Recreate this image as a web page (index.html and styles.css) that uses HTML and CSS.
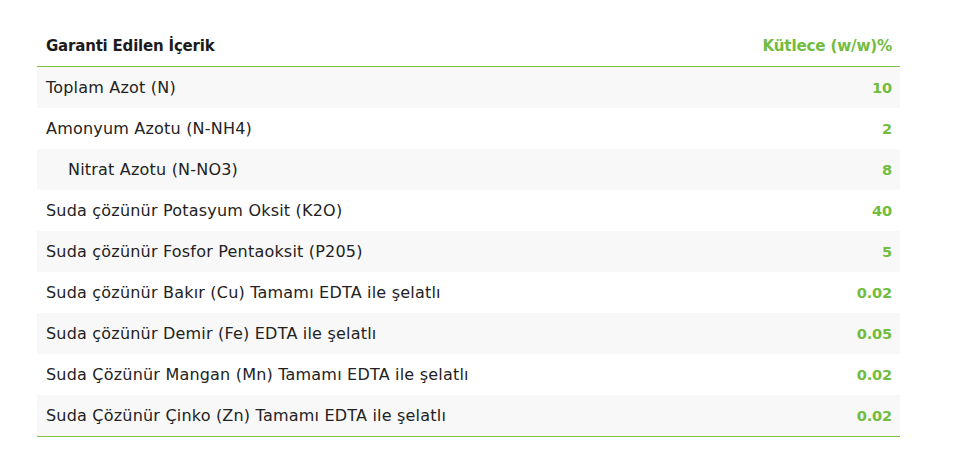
FILE: index.html
```html
<!DOCTYPE html>
<html lang="tr"><head><meta charset="utf-8"><link rel="stylesheet" href="styles.css"></head>
<body>
<div class="table">
  <div class="row head">
    <div class="name">Garanti Edilen İçerik</div>
    <div class="val">Kütlece (w/w)%</div>
  </div>
  <div class="row alt"><div class="name">Toplam Azot (N)</div><div class="val">10</div></div>
  <div class="row"><div class="name">Amonyum Azotu (N-NH4)</div><div class="val">2</div></div>
  <div class="row alt"><div class="name sub">Nitrat Azotu (N-NO3)</div><div class="val">8</div></div>
  <div class="row"><div class="name">Suda çözünür Potasyum Oksit (K2O)</div><div class="val">40</div></div>
  <div class="row alt"><div class="name">Suda çözünür Fosfor Pentaoksit (P205)</div><div class="val">5</div></div>
  <div class="row"><div class="name">Suda çözünür Bakır (Cu) Tamamı EDTA ile şelatlı</div><div class="val">0.02</div></div>
  <div class="row alt"><div class="name">Suda çözünür Demir (Fe) EDTA ile şelatlı</div><div class="val">0.05</div></div>
  <div class="row"><div class="name">Suda Çözünür Mangan (Mn) Tamamı EDTA ile şelatlı</div><div class="val">0.02</div></div>
  <div class="row alt last"><div class="name">Suda Çözünür Çinko (Zn) Tamamı EDTA ile şelatlı</div><div class="val">0.02</div></div>
</div>
</body></html>
```
FILE: styles.css
```css
body{margin:0;background:#fff;font-family:"DejaVu Sans","Noto Sans",sans-serif;color:#222;}
.table{margin:26px 0 0 37px;width:863px;border-bottom:1px solid #7cc142;}
.row{display:flex;justify-content:space-between;align-items:center;height:41px;padding:0 8px 0 9px;box-sizing:border-box;}
.row.alt{background:#f8f8f8;}
.name{font-size:16px;letter-spacing:0.2px;}
.row.head{height:41px;border-bottom:1px solid #7cc142;}
.head .name{color:#1b1b1b;font-weight:bold;font-size:15px;letter-spacing:-0.2px;}
.val{color:#72bd3e;font-weight:bold;font-size:14.6px;letter-spacing:-0.2px;}
.head .val{font-size:15.2px;}
.sub{padding-left:22px;}
```
